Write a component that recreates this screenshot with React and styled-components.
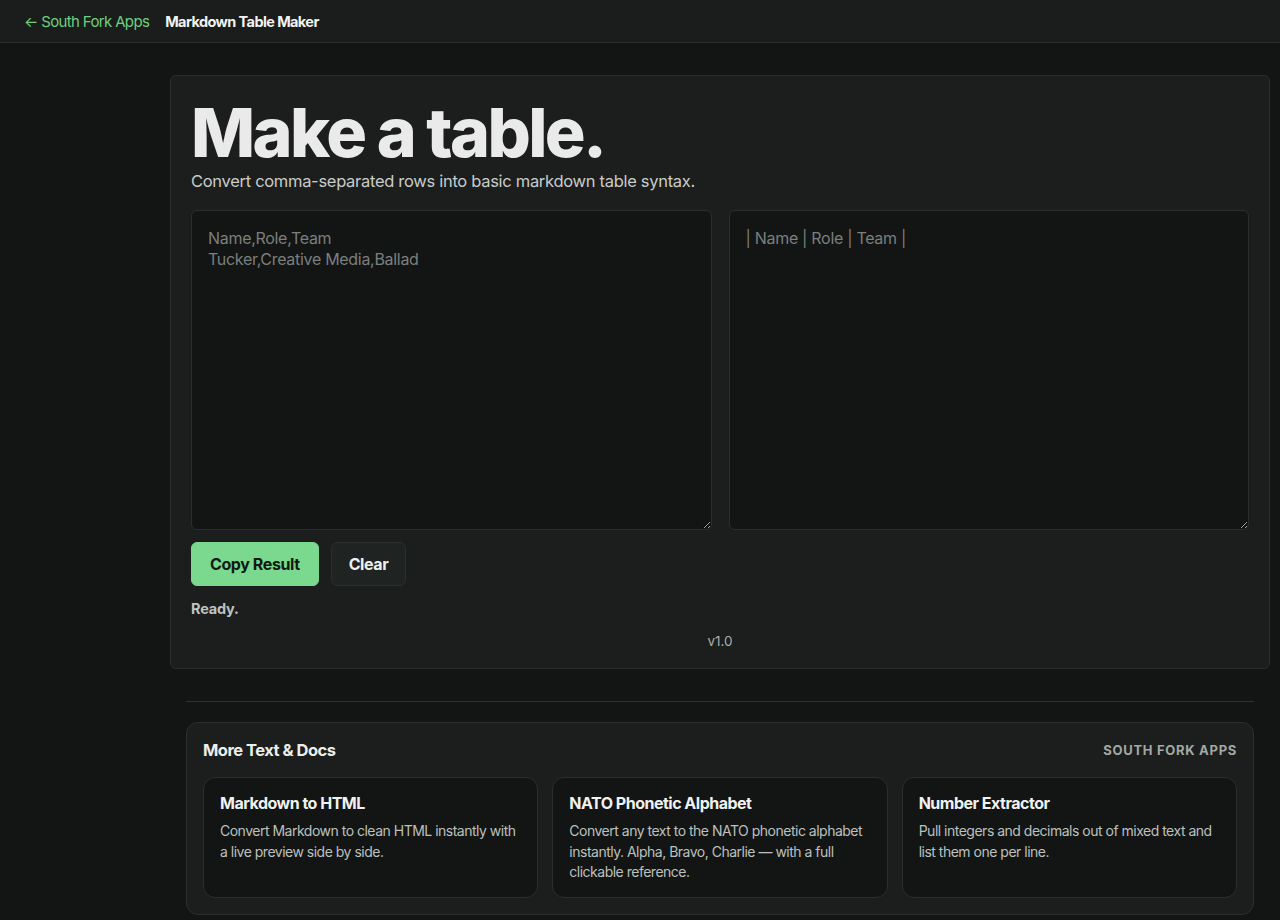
import styled, { createGlobalStyle } from "styled-components";

const Global = createGlobalStyle`
  html, body {
    margin: 0;
    padding: 0;
    background: #121514;
    color: #ecedec;
    font-family: Inter, "Noto Sans", sans-serif;
  }
  * { box-sizing: border-box; }
`;

const TopBar = styled.header`
  height: 43px;
  display: flex;
  align-items: center;
  gap: 16px;
  padding: 0 24px;
  background: #1a1d1b;
  border-bottom: 1px solid #2a2f2c;
`;

const BackLink = styled.a`
  color: #6fcf7f;
  font-size: 15px;
  text-decoration: none;
  letter-spacing: -0.65px;
`;

const PageTitle = styled.span`
  font-size: 14.5px;
  font-weight: 700;
  color: #f2f3f2;
  letter-spacing: -0.6px;
`;

const Main = styled.main`
  width: 1100px;
  margin-left: 170px;
  padding-top: 32px;
`;

const ToolCard = styled.section`
  background: #1b1e1c;
  border: 1px solid #2a2e2c;
  border-radius: 6px;
  padding: 20px 20px 19px;
`;

const Heading = styled.h1`
  margin: 0;
  font-size: 68px;
  line-height: 72px;
  font-weight: 800;
  letter-spacing: -2.6px;
  color: #e9eae9;
`;

const Lead = styled.p`
  margin: 3px 0 19px;
  font-size: 16.5px;
  color: #c9ccca;
  letter-spacing: -0.3px;
`;

const Editors = styled.div`
  display: grid;
  grid-template-columns: 1fr 1fr;
  gap: 17px;
`;

const Area = styled.textarea`
  height: 320px;
  resize: vertical;
  background: #121514;
  border: 1px solid #2a2e2c;
  border-radius: 6px;
  padding: 17px 16px 16px;
  font-family: Inter, "Noto Sans", sans-serif;
  font-size: 16px;
  line-height: 21px;
  letter-spacing: -0.3px;
  color: #e5e7e6;
  outline: none;
  &::placeholder { color: #7b7f7d; }
`;

const Actions = styled.div`
  display: flex;
  gap: 12px;
  margin-top: 12px;
`;

const Button = styled.button`
  height: 44px;
  padding: 0 ${(p) => (p.$primary ? "18px" : "17px")};
  border-radius: 6px;
  font-family: Inter, "Noto Sans", sans-serif;
  font-size: 16px;
  font-weight: 700;
  letter-spacing: -0.4px;
  cursor: pointer;
  border: 1px solid ${(p) => (p.$primary ? "#7bd88f" : "#2a2e2c")};
  background: ${(p) => (p.$primary ? "#7bd88f" : "#1f2321")};
  color: ${(p) => (p.$primary ? "#0f1a12" : "#eef0ef")};
`;

const Status = styled.div`
  margin-top: 14px;
  font-size: 14.5px;
  font-weight: 700;
  letter-spacing: -0.2px;
  color: #bfc3c1;
`;

const Version = styled.div`
  margin-top: 16px;
  text-align: center;
  font-size: 13.5px;
  color: #a9adab;
`;

const Divider = styled.hr`
  margin: 32px 16px 20px;
  border: 0;
  border-top: 1px solid #2c3230;
`;

const More = styled.section`
  margin: 0 16px;
  background: #1b1e1c;
  border: 1px solid #2a2e2c;
  border-radius: 12px;
  padding: 17px 16px 16px;
`;

const MoreHead = styled.div`
  display: flex;
  justify-content: space-between;
  align-items: center;
  margin-bottom: 17px;
`;

const MoreTitle = styled.h2`
  margin: 0;
  font-size: 16.5px;
  font-weight: 700;
  letter-spacing: -0.5px;
  color: #eceeed;
`;

const Brand = styled.span`
  font-size: 13px;
  font-weight: 700;
  letter-spacing: 0.7px;
  color: #a3a8a5;
`;

const Cards = styled.div`
  display: grid;
  grid-template-columns: repeat(3, 1fr);
  gap: 14px;
`;

const Card = styled.a`
  display: block;
  min-height: 121px;
  background: #121514;
  border: 1px solid #2a2e2c;
  border-radius: 12px;
  padding: 15px 16px 14px;
  text-decoration: none;
`;

const CardTitle = styled.div`
  font-size: 16px;
  font-weight: 700;
  letter-spacing: -0.5px;
  color: #f0f1f0;
  margin-bottom: 8px;
`;

const CardText = styled.div`
  font-size: 14px;
  line-height: 20.5px;
  color: #bcc0be;
  letter-spacing: -0.5px;
`;

const related = [
  { title: "Markdown to HTML", text: "Convert Markdown to clean HTML instantly with a live preview side by side." },
  { title: "NATO Phonetic Alphabet", text: "Convert any text to the NATO phonetic alphabet instantly. Alpha, Bravo, Charlie — with a full clickable reference." },
  { title: "Number Extractor", text: "Pull integers and decimals out of mixed text and list them one per line." },
];

export default function App() {
  return (
    <>
      <Global />
      <TopBar>
        <BackLink href="#">← South Fork Apps</BackLink>
        <PageTitle>Markdown Table Maker</PageTitle>
      </TopBar>
      <Main>
        <ToolCard>
          <Heading>Make a table.</Heading>
          <Lead>Convert comma-separated rows into basic markdown table syntax.</Lead>
          <Editors>
            <Area placeholder={"Name,Role,Team\nTucker,Creative Media,Ballad"} />
            <Area readOnly placeholder="| Name | Role | Team |" />
          </Editors>
          <Actions>
            <Button $primary>Copy Result</Button>
            <Button>Clear</Button>
          </Actions>
          <Status>Ready.</Status>
          <Version>v1.0</Version>
        </ToolCard>
        <Divider />
        <More>
          <MoreHead>
            <MoreTitle>More Text &amp; Docs</MoreTitle>
            <Brand>SOUTH FORK APPS</Brand>
          </MoreHead>
          <Cards>
            {related.map((r) => (
              <Card href="#" key={r.title}>
                <CardTitle>{r.title}</CardTitle>
                <CardText>{r.text}</CardText>
              </Card>
            ))}
          </Cards>
        </More>
      </Main>
    </>
  );
}
